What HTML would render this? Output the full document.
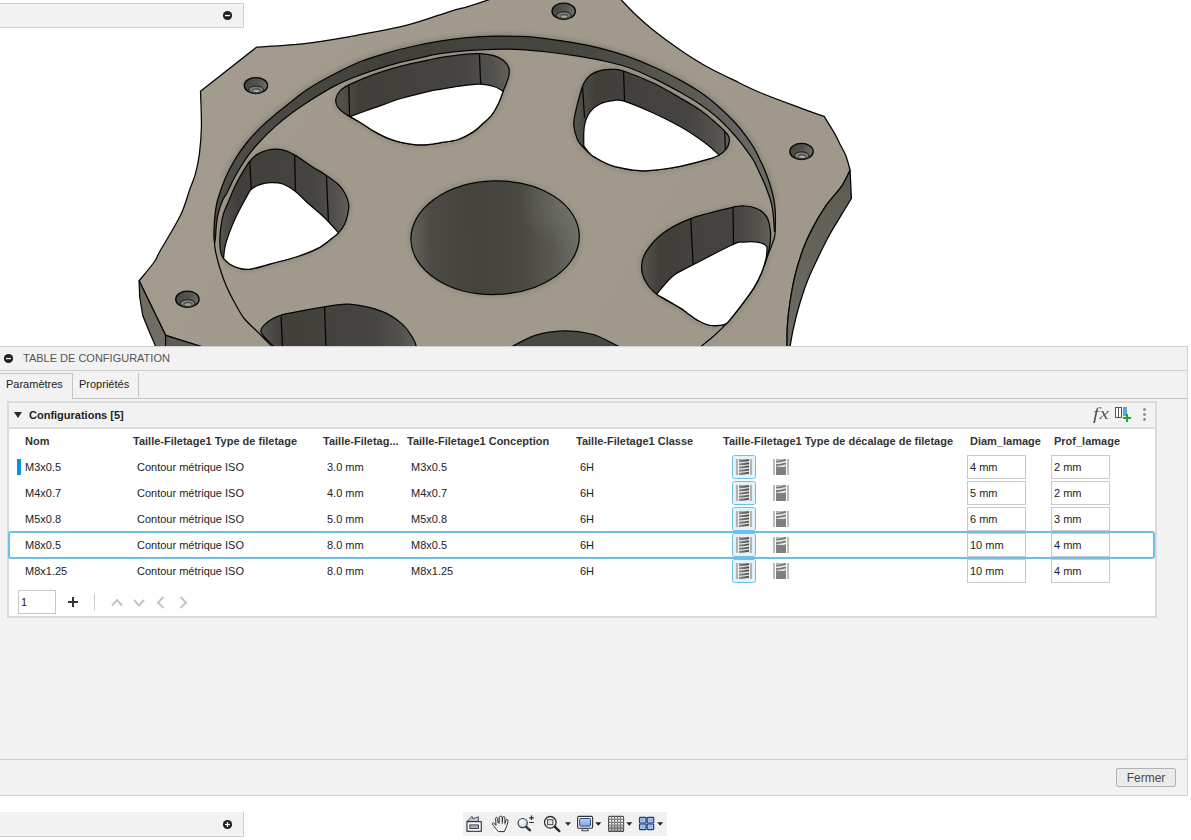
<!DOCTYPE html>
<html lang="fr">
<head>
<meta charset="utf-8">
<title>Table de configuration</title>
<style>
*{box-sizing:border-box;margin:0;padding:0}
html,body{width:1191px;height:840px;overflow:hidden;background:#fff;font-family:"Liberation Sans",Arial,sans-serif;font-size:11px;color:#222}
.abs{position:absolute}
#model{position:absolute;left:0;top:0;width:1191px;height:347px}
.sidebar{position:absolute;left:-1px;width:245px;height:25px;background:#f2f2f2;border:1px solid #cfcfcf}
.dot{position:absolute;width:9px;height:9px;border-radius:50%;background:#1f1f1f}
#panel{position:absolute;left:-1px;top:346px;width:1189px;height:450px;background:#f2f2f2;border:1px solid #cfcfcf}
#ptitle{position:absolute;left:23px;top:352px;font-size:11px;color:#555;line-height:13px}
#tabline{position:absolute;left:0;top:370px;width:1187px;height:1px;background:#cdcdcd}
.tab{position:absolute;top:371px;height:27px;line-height:26px;font-size:11px;color:#222}
#box{position:absolute;left:7px;top:401px;width:1150px;height:217px;border:2px solid #dadada;background:#fff}
#boxhead{position:absolute;left:0;top:0;width:1146px;height:26px;background:#f2f2f2;border-bottom:2px solid #dadada}
.b{font-weight:bold}
.th{position:absolute;top:435px;font-weight:bold;line-height:13px;white-space:nowrap;color:#333}
.td{position:absolute;line-height:13px;white-space:nowrap;color:#222}
.inp{position:absolute;width:59px;height:24px;border:1px solid #c8c8c8;background:#fff;line-height:22px;padding-left:2px;color:#222}
#footline{position:absolute;left:0;top:759px;width:1187px;height:1px;background:#cdcdcd}
#fermer{position:absolute;left:1116px;top:768px;width:60px;height:19px;border:1px solid #b2b2b2;border-radius:2px;background:#ebebeb;font-size:12px;line-height:18px;text-align:center;color:#4a4a4a}
#toolbar{position:absolute;left:463px;top:812px;width:204px;height:24px;background:#f1f1f1}
</style>
</head>
<body>
<svg id="model" viewBox="0 0 1191 347">
<defs>
<linearGradient id="gTop" gradientUnits="userSpaceOnUse" x1="200" y1="40" x2="700" y2="340"><stop offset="0" stop-color="#a29b8e"/><stop offset="0.5" stop-color="#a0998c"/><stop offset="1" stop-color="#9f988b"/></linearGradient>
<linearGradient id="gWall" gradientUnits="userSpaceOnUse" x1="220" y1="0" x2="780" y2="0"><stop offset="0" stop-color="#504e48"/><stop offset="0.3" stop-color="#42403b"/><stop offset="0.65" stop-color="#484641"/><stop offset="0.85" stop-color="#5d5c56"/><stop offset="1" stop-color="#6e6d67"/></linearGradient>
<linearGradient id="gHole" gradientUnits="userSpaceOnUse" x1="411" y1="0" x2="579" y2="0"><stop offset="0" stop-color="#64625c"/><stop offset="0.12" stop-color="#4c4a45"/><stop offset="0.4" stop-color="#45423d"/><stop offset="0.65" stop-color="#4a4843"/><stop offset="0.85" stop-color="#595852"/><stop offset="1" stop-color="#6f6f69"/></linearGradient>
<radialGradient id="gHoleHi" gradientUnits="userSpaceOnUse" cx="565" cy="205" r="45"><stop offset="0" stop-color="#7a7a74" stop-opacity=".5"/><stop offset="1" stop-color="#7a7a74" stop-opacity="0"/></radialGradient>
<linearGradient id="gSideR" gradientUnits="userSpaceOnUse" x1="850" y1="170" x2="790" y2="340"><stop offset="0" stop-color="#5c5b52"/><stop offset="1" stop-color="#6e6c62"/></linearGradient>
<linearGradient id="gPk" x1="0" y1="0" x2="1" y2="0"><stop offset="0" stop-color="#56544f"/><stop offset="0.14" stop-color="#423f3b"/><stop offset="0.72" stop-color="#464440"/><stop offset="0.9" stop-color="#53514c"/><stop offset="1" stop-color="#62615b"/></linearGradient>
<linearGradient id="gScrew" x1="0" y1="0" x2="1" y2="0.3"><stop offset="0" stop-color="#46443f"/><stop offset="0.6" stop-color="#55534e"/><stop offset="1" stop-color="#6d6b65"/></linearGradient>
<filter id="ao" x="-5%" y="-5%" width="110%" height="110%"><feGaussianBlur stdDeviation="2"/></filter>
</defs>
<path d="M256.7 47.1C265.0 46.5 289.6 45.3 306.3 43.3C323.0 41.3 339.9 38.3 356.7 35.3C373.5 32.3 391.4 29.2 407.0 25.2C422.6 21.2 440.2 14.4 450.4 11.3C460.6 8.2 461.2 8.7 468.0 6.6C474.8 4.5 487.2 0.3 491.0 -1.0L620.4 -1.0C623.0 1.7 630.5 9.8 636.0 15.0C641.5 20.2 645.7 24.1 653.1 30.0C660.5 35.9 671.5 44.0 680.6 50.2C689.7 56.4 698.5 62.0 707.5 67.0C716.5 72.0 725.6 76.2 734.4 80.4C743.1 84.7 748.8 87.8 760.0 92.5C771.2 97.2 790.8 104.3 801.5 108.3C812.2 112.3 820.4 115.1 824.2 116.4C825.9 119.2 832.0 128.8 834.6 133.4C837.2 138.0 838.2 140.6 840.0 144.2C841.8 147.8 843.9 150.8 845.6 155.1C847.3 159.4 849.4 167.7 850.1 170.2C848.7 172.8 845.8 180.1 841.7 186.1C837.6 192.1 830.2 199.6 825.5 206.3C820.8 213.1 817.1 219.5 813.4 226.6C809.7 233.7 806.2 240.7 803.2 248.8C800.2 256.9 797.3 266.3 795.1 275.1C792.9 283.9 791.4 293.1 790.1 301.5C788.8 309.9 787.9 318.1 787.4 325.7C786.9 333.3 787.1 343.4 787.0 347.0L203.0 347.0L165.6 335.3L139.1 280.8C141.6 277.7 150.7 267.0 154.2 262.0C157.7 257.0 155.8 258.5 160.2 250.8C164.6 243.1 175.4 225.9 180.4 215.6C185.4 205.2 187.5 195.6 190.0 188.7C192.5 181.8 193.8 179.7 195.4 173.9C197.0 168.1 198.4 161.6 199.4 153.8C200.4 146.0 201.2 137.3 201.4 126.9C201.6 116.5 200.7 97.2 200.5 91.2L256.7 47.1Z" fill="url(#gTop)" stroke="#050505" stroke-width="1.25" stroke-linejoin="round"/>
<path d="M850.1 170.2C848.7 172.8 845.8 180.1 841.7 186.1C837.6 192.1 830.2 199.6 825.5 206.3C820.8 213.1 817.1 219.5 813.4 226.6C809.7 233.7 806.2 240.7 803.2 248.8C800.2 256.9 797.3 266.3 795.1 275.1C792.9 283.9 791.4 293.1 790.1 301.5C788.8 309.9 787.9 318.1 787.4 325.7C786.9 333.3 787.1 343.4 787.0 347.0L790.0 347.0C790.5 344.1 791.6 336.7 793.1 329.8C794.6 322.9 796.8 313.6 799.2 305.5C801.6 297.4 804.3 289.0 807.3 281.2C810.3 273.4 813.7 266.6 817.4 258.9C821.1 251.1 825.5 242.1 829.6 234.7C833.7 227.3 838.1 220.4 841.7 214.4C845.3 208.4 849.8 201.1 851.4 198.4Z" fill="url(#gSideR)" stroke="#050505" stroke-width="1.25" stroke-linejoin="round"/>
<path d="M139.1 280.8L139.7 297.0L142.8 315.8L148.8 330.5L155.9 347.0L165.6 347.0L165.6 335.3Z" fill="#6f6d63" stroke="#050505" stroke-width="1.25" stroke-linejoin="round"/>
<path d="M165.6 335.3L165.6 347.0L203.0 347.0Z" fill="#5d5b53" stroke="#050505" stroke-width="1.25" stroke-linejoin="round"/>
<path d="M224.9 179.3C226.5 176.2 230.8 166.6 234.4 160.5C238.0 154.4 242.0 148.6 246.5 143.0C251.0 137.4 256.1 131.9 261.2 126.9C266.3 121.9 272.0 117.3 277.4 112.8C282.8 108.3 288.6 103.8 293.5 100.0C298.4 96.2 300.2 94.0 306.9 89.7C313.6 85.4 324.9 79.0 333.8 74.3C342.8 69.6 351.7 65.1 360.6 61.5C369.6 57.9 378.5 55.4 387.5 52.8C396.5 50.2 405.6 47.9 414.4 46.0C423.1 44.1 431.2 42.6 440.0 41.2C448.8 39.8 457.9 38.6 466.9 37.7C475.9 36.9 484.9 36.3 493.8 36.1C502.8 35.9 511.7 36.0 520.6 36.4C529.6 36.8 538.5 37.7 547.5 38.8C556.5 39.9 565.6 41.2 574.4 42.8C583.1 44.3 591.2 45.9 600.0 48.1C608.8 50.3 617.9 53.1 626.9 56.2C635.9 59.4 644.8 63.0 653.8 67.0C662.8 71.0 672.9 76.2 680.6 80.4C688.3 84.6 694.0 88.0 700.0 92.1C706.0 96.2 711.2 100.2 716.7 105.0C722.2 109.8 728.4 115.7 733.3 120.8C738.1 125.9 742.3 131.2 745.8 135.8C749.3 140.4 751.8 144.3 754.2 148.3C756.6 152.3 758.4 156.7 760.0 160.0C761.6 163.3 762.1 163.9 763.8 168.0C765.5 172.1 768.3 179.1 770.0 184.5C771.7 189.9 773.4 197.9 774.1 200.6" fill="none" stroke="#4b463d" stroke-opacity=".28" stroke-width="5" filter="url(#ao)"/>
<path d="M335.8 99.1C336.2 96.3 338.1 92.9 340.5 90.4C342.9 88.0 344.3 87.1 349.9 84.4C355.5 81.7 365.6 77.3 374.1 74.3C382.6 71.3 392.1 68.5 401.0 66.2C409.9 63.9 421.3 61.6 427.8 60.2C434.3 58.8 433.5 58.6 440.0 57.6C446.5 56.6 460.3 54.9 466.9 54.2C473.5 53.5 475.2 53.4 479.7 53.6C484.2 53.8 489.9 54.5 493.8 55.6C497.7 56.7 500.8 58.4 503.2 60.3C505.6 62.2 507.5 64.8 508.5 67.0C509.5 69.2 509.5 71.1 509.2 73.8C508.9 76.5 507.5 80.3 506.5 83.2C505.5 86.1 504.4 88.1 503.2 91.2C502.0 94.3 500.9 98.2 499.1 102.0C497.3 105.8 495.1 110.5 492.4 114.1C489.7 117.7 486.1 120.6 483.0 123.5C479.9 126.4 477.8 128.9 473.6 131.6C469.4 134.3 463.6 137.6 458.0 139.5C452.4 141.4 445.0 142.0 440.0 142.8C435.0 143.7 432.1 144.3 427.8 144.6C423.5 144.9 418.9 145.0 414.4 144.6C409.9 144.2 405.5 143.5 401.0 142.4C396.5 141.3 392.0 139.9 387.5 138.1C383.0 136.3 378.6 134.0 374.1 131.4C369.6 128.8 364.6 125.2 360.6 122.7C356.6 120.2 352.6 118.2 349.9 116.6C347.2 115.0 346.5 114.9 344.5 113.3C342.5 111.7 339.2 109.6 337.8 107.2C336.4 104.8 335.4 101.9 335.8 99.1Z" fill="none" stroke="#4b463d" stroke-opacity=".22" stroke-width="4" filter="url(#ao)"/>
<path d="M573.7 124.8C573.4 120.0 574.7 116.3 575.7 111.4C576.7 106.5 578.4 100.0 579.8 95.3C581.1 90.6 582.0 86.6 583.8 83.2C585.6 79.8 587.8 77.2 590.5 75.1C593.2 73.0 596.2 71.5 600.0 70.6C603.8 69.6 609.5 69.3 613.4 69.4C617.3 69.5 616.8 68.7 623.5 71.0C630.2 73.3 644.3 78.8 653.8 83.3C663.3 87.8 672.9 93.8 680.6 98.2C688.3 102.7 694.7 106.4 700.0 110.0C705.3 113.6 708.5 116.5 712.5 120.0C716.5 123.5 721.5 128.0 724.2 130.8C726.9 133.6 728.0 134.9 728.8 136.7C729.6 138.5 729.6 139.8 729.2 141.7C728.9 143.6 728.4 146.1 726.7 148.3C725.0 150.5 722.3 153.2 719.2 155.0C716.1 156.8 714.8 157.3 708.3 159.2C701.8 161.1 688.0 164.7 680.0 166.4C672.0 168.1 666.8 168.8 660.0 169.5C653.2 170.2 646.9 171.2 639.3 170.7C631.6 170.2 620.4 168.0 614.1 166.4C607.8 164.8 605.3 162.9 601.5 161.0C597.7 159.1 594.3 157.3 591.4 155.1C588.5 152.9 586.3 150.5 584.0 148.0C581.7 145.5 579.3 143.9 577.6 140.0C575.9 136.1 574.0 129.6 573.7 124.8Z" fill="none" stroke="#4b463d" stroke-opacity=".22" stroke-width="4" filter="url(#ao)"/>
<path d="M249.8 161.2C252.3 158.2 254.2 156.3 257.2 154.4C260.2 152.5 264.0 150.8 268.0 150.0C272.0 149.2 276.9 148.8 281.4 149.7C285.9 150.5 289.9 152.4 294.8 155.1C299.7 157.8 305.6 162.4 311.0 165.9C316.4 169.4 322.6 172.9 327.1 175.9C331.6 178.9 334.9 181.2 337.8 184.0C340.7 186.8 342.8 189.4 344.6 192.7C346.4 195.9 348.1 200.1 348.6 203.5C349.2 206.9 348.6 210.0 347.9 213.4C347.2 216.8 346.2 220.9 344.6 224.2C343.0 227.4 340.8 230.4 338.5 232.9C336.2 235.4 334.6 236.4 331.1 239.0C327.6 241.6 323.3 245.5 317.7 248.4C312.1 251.3 305.4 253.9 297.5 256.5C289.6 259.1 278.4 261.7 270.6 263.8C262.8 265.9 255.7 268.4 250.5 269.2C245.3 269.9 243.1 269.1 239.7 268.3C236.3 267.5 233.0 266.1 230.3 264.5C227.6 262.9 225.2 260.7 223.6 258.5C222.0 256.3 221.2 254.1 220.6 251.1C220.0 248.1 219.8 244.3 219.8 240.3C219.9 236.3 220.3 231.4 220.9 226.9C221.5 222.4 222.4 217.5 223.6 213.4C224.8 209.3 226.5 206.5 228.3 202.2C230.1 197.9 232.1 192.3 234.4 187.4C236.8 182.5 239.8 177.0 242.4 172.6C245.0 168.2 247.3 164.2 249.8 161.2Z" fill="none" stroke="#4b463d" stroke-opacity=".22" stroke-width="4" filter="url(#ao)"/>
<path d="M641.6 265.9C641.8 260.9 643.0 256.2 646.6 250.8C650.2 245.4 655.8 238.5 663.0 233.2C670.2 227.9 678.5 223.1 690.1 218.8C701.7 214.5 723.3 209.5 732.4 207.4C741.5 205.3 740.7 205.9 744.5 206.0C748.3 206.1 752.2 206.9 755.3 208.0C758.4 209.1 761.2 210.8 763.3 212.7C765.4 214.6 766.8 216.3 768.0 219.5C769.2 222.7 770.2 227.8 770.5 232.1C770.8 236.3 770.4 240.8 769.8 245.0C769.2 249.2 768.5 252.5 767.1 257.1C765.7 261.8 763.5 267.9 761.4 272.9C759.3 277.9 757.1 282.4 754.3 287.1C751.4 291.9 747.6 296.9 744.3 301.4C741.0 305.9 737.3 310.6 734.3 314.3C731.3 318.0 728.8 321.8 726.4 323.6C724.0 325.4 723.0 325.1 720.0 325.3C717.0 325.5 712.4 325.9 708.6 325.0C704.8 324.1 700.7 322.0 697.1 320.0C693.5 318.0 690.0 314.9 687.1 312.9C684.2 310.9 685.1 311.0 680.0 307.9C674.9 304.8 662.5 298.7 656.7 294.2C650.9 289.7 647.8 285.7 645.3 281.0C642.8 276.3 641.4 270.9 641.6 265.9Z" fill="none" stroke="#4b463d" stroke-opacity=".22" stroke-width="4" filter="url(#ao)"/>
<ellipse cx="495.1" cy="237.700" rx="84.200" ry="56.800" fill="none" stroke="#4b463d" stroke-opacity=".22" stroke-width="4" filter="url(#ao)"/>
<path d="M214.2 240.0C214.1 238.9 213.8 237.6 213.9 233.6C214.0 229.6 214.3 221.7 214.9 216.1C215.5 210.5 215.9 206.1 217.6 200.0C219.3 193.9 222.1 185.9 224.9 179.3C227.7 172.7 230.8 166.6 234.4 160.5C238.0 154.4 242.0 148.6 246.5 143.0C251.0 137.4 256.1 131.9 261.2 126.9C266.3 121.9 272.0 117.3 277.4 112.8C282.8 108.3 288.6 103.8 293.5 100.0C298.4 96.2 300.2 94.0 306.9 89.7C313.6 85.4 324.9 79.0 333.8 74.3C342.8 69.6 351.7 65.1 360.6 61.5C369.6 57.9 378.5 55.4 387.5 52.8C396.5 50.2 405.6 47.9 414.4 46.0C423.1 44.1 431.2 42.6 440.0 41.2C448.8 39.8 457.9 38.6 466.9 37.7C475.9 36.9 484.9 36.3 493.8 36.1C502.8 35.9 511.7 36.0 520.6 36.4C529.6 36.8 538.5 37.7 547.5 38.8C556.5 39.9 565.6 41.2 574.4 42.8C583.1 44.3 591.2 45.9 600.0 48.1C608.8 50.3 617.9 53.1 626.9 56.2C635.9 59.4 644.8 63.0 653.8 67.0C662.8 71.0 672.9 76.2 680.6 80.4C688.3 84.6 694.0 88.0 700.0 92.1C706.0 96.2 711.2 100.2 716.7 105.0C722.2 109.8 728.4 115.7 733.3 120.8C738.1 125.9 742.3 131.2 745.8 135.8C749.3 140.4 751.8 144.3 754.2 148.3C756.6 152.3 758.4 156.7 760.0 160.0C761.6 163.3 762.1 163.9 763.8 168.0C765.5 172.1 768.3 179.1 770.0 184.5C771.7 189.9 773.2 195.7 774.1 200.6C775.0 205.5 775.2 208.8 775.4 214.1C775.6 219.3 775.2 229.1 775.2 232.1L774.5 232.0C774.3 229.5 773.9 221.6 773.4 216.8C772.9 212.0 772.6 208.2 771.4 203.3C770.2 198.4 768.1 192.7 766.0 187.2C763.9 181.7 760.6 175.0 758.5 170.5C756.4 166.0 755.1 163.1 753.3 160.0C751.5 156.9 749.7 154.8 747.5 151.7C745.3 148.6 743.0 145.4 740.0 141.7C737.0 137.9 733.1 133.3 729.2 129.2C725.3 125.1 721.6 121.2 716.7 117.0C711.8 112.8 706.0 108.4 700.0 104.3C694.0 100.2 688.3 96.8 680.6 92.5C672.9 88.2 662.8 82.7 653.8 78.4C644.8 74.2 635.9 70.0 626.9 67.0C617.9 64.0 608.8 62.1 600.0 60.2C591.2 58.3 583.1 57.0 574.4 55.6C565.6 54.2 556.5 53.0 547.5 52.0C538.5 51.0 529.6 50.1 520.6 49.6C511.7 49.1 502.8 49.1 493.8 49.3C484.9 49.5 475.9 49.9 466.9 50.6C457.9 51.3 446.5 52.7 440.0 53.6C433.5 54.5 434.3 54.7 427.8 56.1C421.3 57.5 409.9 59.9 401.0 62.2C392.1 64.5 382.6 67.4 374.1 70.2C365.6 73.0 356.6 76.3 349.9 79.0C343.2 81.7 340.3 82.9 333.8 86.4C327.3 89.9 317.9 95.6 311.0 100.0C304.1 104.4 298.2 108.3 292.2 112.8C286.1 117.3 280.3 121.9 274.7 126.9C269.1 131.9 263.2 137.8 258.5 143.0C253.8 148.2 250.3 152.4 246.5 157.8C242.7 163.2 238.9 169.5 235.7 175.3C232.4 181.1 229.2 188.6 227.0 192.7C224.8 196.8 224.3 196.6 222.8 200.0C221.3 203.4 219.3 208.9 218.2 213.4C217.1 217.9 216.6 222.9 216.2 226.9C215.8 230.9 215.8 234.9 215.5 237.6C215.2 240.3 214.8 242.1 214.6 243.0Z" fill="url(#gWall)" stroke="none"/>
<path d="M214.2 240.0C214.4 241.8 214.6 246.6 215.5 251.1C216.4 255.6 217.8 261.4 219.6 267.2C221.4 273.0 223.8 280.2 226.3 286.0C228.8 291.8 231.4 296.8 234.4 302.2C237.4 307.6 240.1 313.3 244.2 318.5C248.3 323.7 254.3 328.4 259.0 333.2C263.7 337.9 270.2 344.7 272.5 347.0" fill="none" stroke="#050505" stroke-width="1.25" stroke-linejoin="round"/>
<path d="M214.2 240.0C214.1 238.9 213.8 237.6 213.9 233.6C214.0 229.6 214.3 221.7 214.9 216.1C215.5 210.5 215.9 206.1 217.6 200.0C219.3 193.9 222.1 185.9 224.9 179.3C227.7 172.7 230.8 166.6 234.4 160.5C238.0 154.4 242.0 148.6 246.5 143.0C251.0 137.4 256.1 131.9 261.2 126.9C266.3 121.9 272.0 117.3 277.4 112.8C282.8 108.3 288.6 103.8 293.5 100.0C298.4 96.2 300.2 94.0 306.9 89.7C313.6 85.4 324.9 79.0 333.8 74.3C342.8 69.6 351.7 65.1 360.6 61.5C369.6 57.9 378.5 55.4 387.5 52.8C396.5 50.2 405.6 47.9 414.4 46.0C423.1 44.1 431.2 42.6 440.0 41.2C448.8 39.8 457.9 38.6 466.9 37.7C475.9 36.9 484.9 36.3 493.8 36.1C502.8 35.9 511.7 36.0 520.6 36.4C529.6 36.8 538.5 37.7 547.5 38.8C556.5 39.9 565.6 41.2 574.4 42.8C583.1 44.3 591.2 45.9 600.0 48.1C608.8 50.3 617.9 53.1 626.9 56.2C635.9 59.4 644.8 63.0 653.8 67.0C662.8 71.0 672.9 76.2 680.6 80.4C688.3 84.6 694.0 88.0 700.0 92.1C706.0 96.2 711.2 100.2 716.7 105.0C722.2 109.8 728.4 115.7 733.3 120.8C738.1 125.9 742.3 131.2 745.8 135.8C749.3 140.4 751.8 144.3 754.2 148.3C756.6 152.3 758.4 156.7 760.0 160.0C761.6 163.3 762.1 163.9 763.8 168.0C765.5 172.1 768.3 179.1 770.0 184.5C771.7 189.9 773.2 195.7 774.1 200.6C775.0 205.5 775.2 208.8 775.4 214.1C775.6 219.3 775.2 229.1 775.2 232.1" fill="none" stroke="#050505" stroke-width="1.25" stroke-linejoin="round"/>
<path d="M775.2 232.1C775.1 233.1 774.9 235.7 774.3 238.0C773.7 240.3 772.6 242.8 771.4 246.0C770.2 249.2 768.8 252.6 767.1 257.1C765.4 261.6 763.5 267.9 761.4 272.9C759.3 277.9 757.1 282.4 754.3 287.1C751.4 291.9 747.6 296.9 744.3 301.4C741.0 305.9 737.3 310.6 734.3 314.3C731.3 318.0 729.5 320.3 726.4 323.6C723.3 326.9 719.6 330.7 715.7 334.3C711.8 337.9 705.4 342.9 702.9 345.0C700.4 347.1 700.9 346.7 700.5 347.0" fill="none" stroke="#050505" stroke-width="1.25" stroke-linejoin="round"/>
<path d="M214.6 243.0C214.8 242.1 215.2 240.3 215.5 237.6C215.8 234.9 215.8 230.9 216.2 226.9C216.6 222.9 217.1 217.9 218.2 213.4C219.3 208.9 221.3 203.4 222.8 200.0C224.3 196.6 224.8 196.8 227.0 192.7C229.2 188.6 232.4 181.1 235.7 175.3C238.9 169.5 242.7 163.2 246.5 157.8C250.3 152.4 253.8 148.2 258.5 143.0C263.2 137.8 269.1 131.9 274.7 126.9C280.3 121.9 286.1 117.3 292.2 112.8C298.2 108.3 304.1 104.4 311.0 100.0C317.9 95.6 327.3 89.9 333.8 86.4C340.3 82.9 343.2 81.7 349.9 79.0C356.6 76.3 365.6 73.0 374.1 70.2C382.6 67.4 392.1 64.5 401.0 62.2C409.9 59.9 421.3 57.5 427.8 56.1C434.3 54.7 433.5 54.5 440.0 53.6C446.5 52.7 457.9 51.3 466.9 50.6C475.9 49.9 484.9 49.5 493.8 49.3C502.8 49.1 511.7 49.1 520.6 49.6C529.6 50.1 538.5 51.0 547.5 52.0C556.5 53.0 565.6 54.2 574.4 55.6C583.1 57.0 591.2 58.3 600.0 60.2C608.8 62.1 617.9 64.0 626.9 67.0C635.9 70.0 644.8 74.2 653.8 78.4C662.8 82.7 672.9 88.2 680.6 92.5C688.3 96.8 694.0 100.2 700.0 104.3C706.0 108.4 711.8 112.8 716.7 117.0C721.6 121.2 725.3 125.1 729.2 129.2C733.1 133.3 737.0 137.9 740.0 141.7C743.0 145.4 745.3 148.6 747.5 151.7C749.7 154.8 751.5 156.9 753.3 160.0C755.1 163.1 756.4 166.0 758.5 170.5C760.6 175.0 763.9 181.7 766.0 187.2C768.1 192.7 770.2 198.4 771.4 203.3C772.6 208.2 772.9 212.0 773.4 216.8C773.9 221.6 774.3 229.5 774.5 232.0" fill="none" stroke="#050505" stroke-width="1.25" stroke-linejoin="round" stroke-width="1.1"/>
<path d="M335.8 99.1C336.2 96.3 338.1 92.9 340.5 90.4C342.9 88.0 344.3 87.1 349.9 84.4C355.5 81.7 365.6 77.3 374.1 74.3C382.6 71.3 392.1 68.5 401.0 66.2C409.9 63.9 421.3 61.6 427.8 60.2C434.3 58.8 433.5 58.6 440.0 57.6C446.5 56.6 460.3 54.9 466.9 54.2C473.5 53.5 475.2 53.4 479.7 53.6C484.2 53.8 489.9 54.5 493.8 55.6C497.7 56.7 500.8 58.4 503.2 60.3C505.6 62.2 507.5 64.8 508.5 67.0C509.5 69.2 509.5 71.1 509.2 73.8C508.9 76.5 507.5 80.3 506.5 83.2C505.5 86.1 504.4 88.1 503.2 91.2C502.0 94.3 500.9 98.2 499.1 102.0C497.3 105.8 495.1 110.5 492.4 114.1C489.7 117.7 486.1 120.6 483.0 123.5C479.9 126.4 477.8 128.9 473.6 131.6C469.4 134.3 463.6 137.6 458.0 139.5C452.4 141.4 445.0 142.0 440.0 142.8C435.0 143.7 432.1 144.3 427.8 144.6C423.5 144.9 418.9 145.0 414.4 144.6C409.9 144.2 405.5 143.5 401.0 142.4C396.5 141.3 392.0 139.9 387.5 138.1C383.0 136.3 378.6 134.0 374.1 131.4C369.6 128.8 364.6 125.2 360.6 122.7C356.6 120.2 352.6 118.2 349.9 116.6C347.2 115.0 346.5 114.9 344.5 113.3C342.5 111.7 339.2 109.6 337.8 107.2C336.4 104.8 335.4 101.9 335.8 99.1Z" fill="url(#gPk)" stroke="#050505" stroke-width="1.25" stroke-linejoin="round"/>
<path d="M349.9 116.6C353.9 115.1 365.6 110.9 374.1 107.9C382.6 104.9 392.1 101.2 401.0 98.5C409.9 95.8 421.3 93.2 427.8 91.7C434.3 90.2 433.5 90.4 440.0 89.3C446.5 88.2 460.2 86.0 466.9 85.2C473.6 84.4 475.8 84.0 480.3 84.2C484.8 84.4 490.0 85.3 493.8 86.5C497.6 87.7 501.6 90.4 503.2 91.2L503.2 91.2C502.5 93.0 500.9 98.2 499.1 102.0C497.3 105.8 495.1 110.5 492.4 114.1C489.7 117.7 486.1 120.6 483.0 123.5C479.9 126.4 477.8 128.9 473.6 131.6C469.4 134.3 463.6 137.6 458.0 139.5C452.4 141.4 445.0 142.0 440.0 142.8C435.0 143.7 432.1 144.3 427.8 144.6C423.5 144.9 418.9 145.0 414.4 144.6C409.9 144.2 405.5 143.5 401.0 142.4C396.5 141.3 392.0 139.9 387.5 138.1C383.0 136.3 378.6 134.0 374.1 131.4C369.6 128.8 364.6 125.2 360.6 122.7C356.6 120.2 351.7 117.6 349.9 116.6Z" fill="#fff" stroke="#050505" stroke-width="1.25" stroke-linejoin="round" stroke-width="1.1"/>
<path d="M348.8 85.0L349.6 115.9" fill="none" stroke="#050505" stroke-width="1.25" stroke-linejoin="round" stroke-width="1.1"/>
<path d="M479.4 53.9L480.7 84.2" fill="none" stroke="#050505" stroke-width="1.25" stroke-linejoin="round" stroke-width="1.1"/>
<path d="M573.7 124.8C573.4 120.0 574.7 116.3 575.7 111.4C576.7 106.5 578.4 100.0 579.8 95.3C581.1 90.6 582.0 86.6 583.8 83.2C585.6 79.8 587.8 77.2 590.5 75.1C593.2 73.0 596.2 71.5 600.0 70.6C603.8 69.6 609.5 69.3 613.4 69.4C617.3 69.5 616.8 68.7 623.5 71.0C630.2 73.3 644.3 78.8 653.8 83.3C663.3 87.8 672.9 93.8 680.6 98.2C688.3 102.7 694.7 106.4 700.0 110.0C705.3 113.6 708.5 116.5 712.5 120.0C716.5 123.5 721.5 128.0 724.2 130.8C726.9 133.6 728.0 134.9 728.8 136.7C729.6 138.5 729.6 139.8 729.2 141.7C728.9 143.6 728.4 146.1 726.7 148.3C725.0 150.5 722.3 153.2 719.2 155.0C716.1 156.8 714.8 157.3 708.3 159.2C701.8 161.1 688.0 164.7 680.0 166.4C672.0 168.1 666.8 168.8 660.0 169.5C653.2 170.2 646.9 171.2 639.3 170.7C631.6 170.2 620.4 168.0 614.1 166.4C607.8 164.8 605.3 162.9 601.5 161.0C597.7 159.1 594.3 157.3 591.4 155.1C588.5 152.9 586.3 150.5 584.0 148.0C581.7 145.5 579.3 143.9 577.6 140.0C575.9 136.1 574.0 129.6 573.7 124.8Z" fill="url(#gPk)" stroke="#050505" stroke-width="1.25" stroke-linejoin="round"/>
<path d="M583.8 146.0C583.8 143.7 583.6 136.1 583.8 132.1C584.0 128.1 584.1 125.7 585.2 122.2C586.3 118.8 588.0 114.4 590.5 111.4C593.0 108.4 596.2 105.8 600.0 104.0C603.8 102.2 609.4 101.1 613.4 100.6C617.4 100.1 617.5 99.1 624.2 101.2C630.9 103.3 644.4 109.0 653.8 113.3C663.2 117.6 672.9 122.5 680.6 126.8C688.3 131.1 695.1 135.9 700.0 139.2C704.9 142.5 706.9 144.1 710.0 146.7C713.1 149.3 717.3 153.5 718.8 154.8L719.2 155.0C717.4 155.7 714.8 157.3 708.3 159.2C701.8 161.1 688.0 164.7 680.0 166.4C672.0 168.1 666.8 168.8 660.0 169.5C653.2 170.2 646.9 171.2 639.3 170.7C631.6 170.2 620.4 168.0 614.1 166.4C607.8 164.8 605.3 162.9 601.5 161.0C597.7 159.1 594.4 157.6 591.4 155.1C588.4 152.6 585.1 147.5 583.8 146.0Z" fill="#fff" stroke="#050505" stroke-width="1.25" stroke-linejoin="round" stroke-width="1.1"/>
<path d="M582.5 85.9L584.5 118.1" fill="none" stroke="#050505" stroke-width="1.25" stroke-linejoin="round" stroke-width="1.1"/>
<path d="M623.5 71.0L624.6 101.2" fill="none" stroke="#050505" stroke-width="1.25" stroke-linejoin="round" stroke-width="1.1"/>
<path d="M724.6 131.3L725.4 150.0" fill="none" stroke="#050505" stroke-width="1.25" stroke-linejoin="round" stroke-width="1.1"/>
<path d="M249.8 161.2C252.3 158.2 254.2 156.3 257.2 154.4C260.2 152.5 264.0 150.8 268.0 150.0C272.0 149.2 276.9 148.8 281.4 149.7C285.9 150.5 289.9 152.4 294.8 155.1C299.7 157.8 305.6 162.4 311.0 165.9C316.4 169.4 322.6 172.9 327.1 175.9C331.6 178.9 334.9 181.2 337.8 184.0C340.7 186.8 342.8 189.4 344.6 192.7C346.4 195.9 348.1 200.1 348.6 203.5C349.2 206.9 348.6 210.0 347.9 213.4C347.2 216.8 346.2 220.9 344.6 224.2C343.0 227.4 340.8 230.4 338.5 232.9C336.2 235.4 334.6 236.4 331.1 239.0C327.6 241.6 323.3 245.5 317.7 248.4C312.1 251.3 305.4 253.9 297.5 256.5C289.6 259.1 278.4 261.7 270.6 263.8C262.8 265.9 255.7 268.4 250.5 269.2C245.3 269.9 243.1 269.1 239.7 268.3C236.3 267.5 233.0 266.1 230.3 264.5C227.6 262.9 225.2 260.7 223.6 258.5C222.0 256.3 221.2 254.1 220.6 251.1C220.0 248.1 219.8 244.3 219.8 240.3C219.9 236.3 220.3 231.4 220.9 226.9C221.5 222.4 222.4 217.5 223.6 213.4C224.8 209.3 226.5 206.5 228.3 202.2C230.1 197.9 232.1 192.3 234.4 187.4C236.8 182.5 239.8 177.0 242.4 172.6C245.0 168.2 247.3 164.2 249.8 161.2Z" fill="url(#gPk)" stroke="#050505" stroke-width="1.25" stroke-linejoin="round"/>
<path d="M223.6 258.5C223.8 256.6 224.0 251.2 224.9 247.0C225.8 242.8 227.2 238.5 229.0 233.6C230.8 228.7 233.0 223.2 235.7 217.5C238.4 211.8 242.5 204.2 245.1 199.5C247.7 194.8 248.7 191.9 251.2 189.4C253.7 186.9 256.7 185.8 259.9 184.7C263.1 183.6 266.8 182.8 270.6 182.7C274.4 182.6 278.6 182.6 282.7 184.0C286.8 185.4 291.5 188.4 295.5 191.4C299.5 194.4 302.1 197.8 306.9 202.2C311.7 206.5 319.1 212.4 324.4 217.5C329.7 222.6 336.1 230.3 338.5 232.9L338.5 232.9C337.3 233.9 334.6 236.4 331.1 239.0C327.6 241.6 323.3 245.5 317.7 248.4C312.1 251.3 305.4 253.9 297.5 256.5C289.6 259.1 278.4 261.7 270.6 263.8C262.8 265.9 255.7 268.4 250.5 269.2C245.3 269.9 243.1 269.1 239.7 268.3C236.3 267.5 233.0 266.1 230.3 264.5C227.6 262.9 224.7 259.5 223.6 258.5Z" fill="#fff" stroke="#050505" stroke-width="1.25" stroke-linejoin="round" stroke-width="1.1"/>
<path d="M249.8 161.2L251.2 189.4" fill="none" stroke="#050505" stroke-width="1.25" stroke-linejoin="round" stroke-width="1.1"/>
<path d="M294.6 155.1L295.5 191.4" fill="none" stroke="#050505" stroke-width="1.25" stroke-linejoin="round" stroke-width="1.1"/>
<path d="M326.4 175.9L328.4 220.5" fill="none" stroke="#050505" stroke-width="1.25" stroke-linejoin="round" stroke-width="1.1"/>
<path d="M641.6 265.9C641.8 260.9 643.0 256.2 646.6 250.8C650.2 245.4 655.8 238.5 663.0 233.2C670.2 227.9 678.5 223.1 690.1 218.8C701.7 214.5 723.3 209.5 732.4 207.4C741.5 205.3 740.7 205.9 744.5 206.0C748.3 206.1 752.2 206.9 755.3 208.0C758.4 209.1 761.2 210.8 763.3 212.7C765.4 214.6 766.8 216.3 768.0 219.5C769.2 222.7 770.2 227.8 770.5 232.1C770.8 236.3 770.4 240.8 769.8 245.0C769.2 249.2 768.5 252.5 767.1 257.1C765.7 261.8 763.5 267.9 761.4 272.9C759.3 277.9 757.1 282.4 754.3 287.1C751.4 291.9 747.6 296.9 744.3 301.4C741.0 305.9 737.3 310.6 734.3 314.3C731.3 318.0 728.8 321.8 726.4 323.6C724.0 325.4 723.0 325.1 720.0 325.3C717.0 325.5 712.4 325.9 708.6 325.0C704.8 324.1 700.7 322.0 697.1 320.0C693.5 318.0 690.0 314.9 687.1 312.9C684.2 310.9 685.1 311.0 680.0 307.9C674.9 304.8 662.5 298.7 656.7 294.2C650.9 289.7 647.8 285.7 645.3 281.0C642.8 276.3 641.4 270.9 641.6 265.9Z" fill="url(#gPk)" stroke="#050505" stroke-width="1.25" stroke-linejoin="round"/>
<path d="M656.7 294.2C659.4 291.2 666.9 280.9 673.0 276.0C679.1 271.1 683.1 270.0 693.2 264.7C703.3 259.4 725.1 248.1 733.6 244.3C742.1 240.5 740.4 242.5 744.3 242.1C748.2 241.7 753.8 241.7 757.1 242.1C760.4 242.5 762.6 243.4 764.3 244.3C766.0 245.2 766.6 247.0 767.1 247.5L767.1 247.5C766.9 249.3 767.0 254.4 766.0 258.6C765.0 262.8 763.4 268.1 761.4 272.9C759.4 277.6 757.1 282.4 754.3 287.1C751.4 291.9 747.6 296.9 744.3 301.4C741.0 305.9 737.3 310.6 734.3 314.3C731.3 318.0 728.8 321.8 726.4 323.6C724.0 325.4 723.0 325.1 720.0 325.3C717.0 325.5 712.4 325.9 708.6 325.0C704.8 324.1 700.7 322.0 697.1 320.0C693.5 318.0 690.0 314.9 687.1 312.9C684.2 310.9 685.1 311.0 680.0 307.9C674.9 304.8 660.6 296.5 656.7 294.2Z" fill="#fff" stroke="#050505" stroke-width="1.25" stroke-linejoin="round" stroke-width="1.1"/>
<path d="M690.7 218.6L693.2 264.7" fill="none" stroke="#050505" stroke-width="1.25" stroke-linejoin="round" stroke-width="1.1"/>
<path d="M733.0 208.0L733.5 244.5" fill="none" stroke="#050505" stroke-width="1.25" stroke-linejoin="round" stroke-width="1.1"/>
<path d="M274.0 347.0C271.8 344.5 262.1 336.0 261.0 331.9C259.9 327.8 264.3 325.1 267.1 322.5C269.9 319.9 274.0 318.0 277.8 316.4C281.6 314.8 282.2 314.7 290.0 313.1C297.8 311.5 314.5 308.4 324.4 306.9C334.2 305.4 339.5 303.5 349.1 304.2C358.7 304.9 373.1 308.0 381.9 311.3C390.7 314.6 396.8 319.3 402.0 323.9C407.2 328.5 411.0 335.1 413.4 339.0C415.8 342.9 415.9 345.7 416.4 347.0Z" fill="url(#gPk)" stroke="#050505" stroke-width="1.25" stroke-linejoin="round"/>
<path d="M281.1 316.5L282.5 347.0" fill="none" stroke="#050505" stroke-width="1.25" stroke-linejoin="round" stroke-width="1.1"/>
<path d="M324.5 306.2L326.0 347.0" fill="none" stroke="#050505" stroke-width="1.25" stroke-linejoin="round" stroke-width="1.1"/>
<path d="M511.0 347.0C515.2 345.0 527.2 337.9 536.0 335.2C544.8 332.5 554.5 331.1 563.7 330.9C572.9 330.7 583.8 332.2 591.4 334.0C599.0 335.8 604.3 339.3 609.1 341.5C613.9 343.7 618.2 346.1 620.0 347.0Z" fill="#4a4843" stroke="#050505" stroke-width="1.25" stroke-linejoin="round"/>
<ellipse cx="495.1" cy="237.7" rx="84.2" ry="56.8" transform="rotate(-1.5 495 237.5)" fill="url(#gHole)" stroke="#050505" stroke-width="1.25" stroke-linejoin="round"/>
<ellipse cx="495.1" cy="237.7" rx="83.6" ry="56.1" transform="rotate(-1.5 495 237.5)" fill="url(#gHoleHi)" stroke="none"/>
<ellipse cx="255.9" cy="85.6" rx="11.7" ry="8.1" fill="url(#gScrew)" stroke="#050505" stroke-width="1.25" stroke-linejoin="round"/>
<ellipse cx="256.1" cy="89.69999999999999" rx="7.4" ry="3.7" fill="#7b7972" stroke="#111" stroke-width="0.9"/>
<ellipse cx="256.4" cy="90.89999999999999" rx="4" ry="1.9" fill="#a5a39c" stroke="#222" stroke-width="0.8"/>
<ellipse cx="563.7" cy="11.3" rx="11.7" ry="8.1" fill="url(#gScrew)" stroke="#050505" stroke-width="1.25" stroke-linejoin="round"/>
<ellipse cx="563.9000000000001" cy="15.4" rx="7.4" ry="3.7" fill="#7b7972" stroke="#111" stroke-width="0.9"/>
<ellipse cx="564.2" cy="16.6" rx="4" ry="1.9" fill="#a5a39c" stroke="#222" stroke-width="0.8"/>
<ellipse cx="801.5" cy="151.5" rx="11.7" ry="8.1" fill="url(#gScrew)" stroke="#050505" stroke-width="1.25" stroke-linejoin="round"/>
<ellipse cx="801.7" cy="155.6" rx="7.4" ry="3.7" fill="#7b7972" stroke="#111" stroke-width="0.9"/>
<ellipse cx="802.0" cy="156.8" rx="4" ry="1.9" fill="#a5a39c" stroke="#222" stroke-width="0.8"/>
<ellipse cx="187.4" cy="299.2" rx="11.7" ry="8.1" fill="url(#gScrew)" stroke="#050505" stroke-width="1.25" stroke-linejoin="round"/>
<ellipse cx="187.6" cy="303.3" rx="7.4" ry="3.7" fill="#7b7972" stroke="#111" stroke-width="0.9"/>
<ellipse cx="187.9" cy="304.5" rx="4" ry="1.9" fill="#a5a39c" stroke="#222" stroke-width="0.8"/>
</svg>
<div class="sidebar" style="top:3px"></div><svg class="abs" style="left:222px;top:10px" width="11" height="11"><circle cx="5.5" cy="5.5" r="4.6" fill="#222"/><rect x="3" y="4.9" width="5" height="1.3" fill="#fff"/></svg>
<div id="panel"></div>
<svg class="abs" style="left:3px;top:353px" width="11" height="11"><circle cx="5.5" cy="5.5" r="4.6" fill="#222"/><rect x="3" y="4.9" width="5" height="1.3" fill="#fff"/></svg>
<div id="ptitle">TABLE DE CONFIGURATION</div>
<div id="tabline"></div>
<div class="abs" style="left:0;top:373px;width:73px;height:26px;border-top:1px solid #c4c4c4;border-right:1px solid #c4c4c4"></div>
<div class="abs" style="left:72px;top:398px;width:1115px;height:1px;background:#c4c4c4"></div>
<div class="abs" style="left:138px;top:373px;width:1px;height:24px;background:#c4c4c4"></div>
<div class="tab" style="left:6px">Paramètres</div>
<div class="tab" style="left:79px">Propriétés</div>
<div id="box"><div id="boxhead"></div></div>
<svg width="0" height="0" style="position:absolute">
<defs>
<linearGradient id="thg" x1="0" x2="1" y1="0" y2="0"><stop offset="0" stop-color="#8a8a8a"/><stop offset="0.45" stop-color="#6a6a6a"/><stop offset="1" stop-color="#4e4e4e"/></linearGradient>
</defs></svg>
<div class="abs" style="left:14px;top:412px;width:0;height:0;border-left:4.5px solid transparent;border-right:4.5px solid transparent;border-top:6px solid #2b2b2b"></div>
<div class="td b" style="left:29px;top:409px;color:#222">Configurations [5]</div>
<div class="abs" style="left:1093px;top:405px;font-family:'Liberation Serif',serif;font-style:italic;font-size:17px;line-height:18px;color:#555;letter-spacing:.5px;transform:scaleX(1.25);transform-origin:0 0">fx</div>
<svg class="abs" style="left:1113px;top:405px" width="20" height="20"><rect x="2.5" y="2.5" width="3" height="10" fill="#fff" stroke="#555"/><rect x="5.5" y="2.5" width="3" height="10" fill="#fff" stroke="#555"/><rect x="10" y="2" width="4" height="9" fill="#5aa5e0"/><path d="M10 13h8M14 9v8" stroke="#1ca538" stroke-width="2"/></svg>
<svg class="abs" style="left:1140px;top:405px" width="10" height="20"><circle cx="4.5" cy="4.5" r="1.4" fill="#8a8a8a"/><circle cx="4.5" cy="9.5" r="1.4" fill="#8a8a8a"/><circle cx="4.5" cy="14.5" r="1.4" fill="#8a8a8a"/></svg>
<div class="th" style="left:25px">Nom</div>
<div class="th" style="left:133px">Taille-Filetage1 Type de filetage</div>
<div class="th" style="left:323px">Taille-Filetag...</div>
<div class="th" style="left:407px">Taille-Filetage1 Conception</div>
<div class="th" style="left:576px">Taille-Filetage1 Classe</div>
<div class="th" style="left:723px">Taille-Filetage1 Type de décalage de filetage</div>
<div class="th" style="left:970px">Diam_lamage</div>
<div class="th" style="left:1054px">Prof_lamage</div>
<div class="abs" style="left:17px;top:459px;width:4px;height:16px;background:#0d93d4"></div>
<div class="td" style="left:25px;top:461px">M3x0.5</div>
<div class="td" style="left:137px;top:461px">Contour métrique ISO</div>
<div class="td" style="left:327px;top:461px">3.0 mm</div>
<div class="td" style="left:411px;top:461px">M3x0.5</div>
<div class="td" style="left:580px;top:461px">6H</div>
<svg class="abs" style="left:732px;top:455px" width="24" height="24"><rect x="0.5" y="0.5" width="23" height="23" rx="2" fill="#e6f2fa" stroke="#6cc0ea"/>
<rect x="4" y="4" width="2" height="16" fill="#b7b2b0"/><rect x="18" y="4" width="2" height="16" fill="#b7b2b0"/>
<rect x="7" y="4" width="10" height="16" fill="#dfe3e6"/>
<g stroke="url(#thg)" stroke-width="1.9" fill="none">
<path d="M7 6.200Q12 6 17 5"/><path d="M7 9.400Q12 9.200 17 8.200"/><path d="M7 12.600Q12 12.400 17 11.400"/><path d="M7 15.800Q12 15.600 17 14.600"/><path d="M7 19Q12 18.800 17 17.800"/>
</g>
<path d="M7 4 h10 v0.8 q-5 -1 -10 0z" fill="#777"/></svg>
<svg class="abs" style="left:770px;top:455px" width="24" height="24"><rect x="3" y="4" width="2" height="16" fill="#bcbcbc"/><rect x="17" y="4" width="2" height="16" fill="#bcbcbc"/>
<rect x="6" y="4" width="10" height="8" fill="#e4e6e8"/>
<g stroke="#777" stroke-width="1.8" fill="none">
<path d="M6 6.6 Q11 6.2 16 4.8"/><path d="M6 10.2 Q11 9.8 16 8.4"/>
</g>
<path d="M6 4 h10 v0.8 q-5 -1 -10 0z" fill="#888"/>
<path d="M6 11.2 q5 1.8 10 0 V20 H6z" fill="#808080"/></svg>
<div class="inp" style="left:967px;top:455px">4 mm</div>
<div class="inp" style="left:1051px;top:455px">2 mm</div>
<div class="td" style="left:25px;top:487px">M4x0.7</div>
<div class="td" style="left:137px;top:487px">Contour métrique ISO</div>
<div class="td" style="left:327px;top:487px">4.0 mm</div>
<div class="td" style="left:411px;top:487px">M4x0.7</div>
<div class="td" style="left:580px;top:487px">6H</div>
<svg class="abs" style="left:732px;top:481px" width="24" height="24"><rect x="0.5" y="0.5" width="23" height="23" rx="2" fill="#e6f2fa" stroke="#6cc0ea"/>
<rect x="4" y="4" width="2" height="16" fill="#b7b2b0"/><rect x="18" y="4" width="2" height="16" fill="#b7b2b0"/>
<rect x="7" y="4" width="10" height="16" fill="#dfe3e6"/>
<g stroke="url(#thg)" stroke-width="1.9" fill="none">
<path d="M7 6.200Q12 6 17 5"/><path d="M7 9.400Q12 9.200 17 8.200"/><path d="M7 12.600Q12 12.400 17 11.400"/><path d="M7 15.800Q12 15.600 17 14.600"/><path d="M7 19Q12 18.800 17 17.800"/>
</g>
<path d="M7 4 h10 v0.8 q-5 -1 -10 0z" fill="#777"/></svg>
<svg class="abs" style="left:770px;top:481px" width="24" height="24"><rect x="3" y="4" width="2" height="16" fill="#bcbcbc"/><rect x="17" y="4" width="2" height="16" fill="#bcbcbc"/>
<rect x="6" y="4" width="10" height="8" fill="#e4e6e8"/>
<g stroke="#777" stroke-width="1.8" fill="none">
<path d="M6 6.6 Q11 6.2 16 4.8"/><path d="M6 10.2 Q11 9.8 16 8.4"/>
</g>
<path d="M6 4 h10 v0.8 q-5 -1 -10 0z" fill="#888"/>
<path d="M6 11.2 q5 1.8 10 0 V20 H6z" fill="#808080"/></svg>
<div class="inp" style="left:967px;top:481px">5 mm</div>
<div class="inp" style="left:1051px;top:481px">2 mm</div>
<div class="td" style="left:25px;top:513px">M5x0.8</div>
<div class="td" style="left:137px;top:513px">Contour métrique ISO</div>
<div class="td" style="left:327px;top:513px">5.0 mm</div>
<div class="td" style="left:411px;top:513px">M5x0.8</div>
<div class="td" style="left:580px;top:513px">6H</div>
<svg class="abs" style="left:732px;top:507px" width="24" height="24"><rect x="0.5" y="0.5" width="23" height="23" rx="2" fill="#e6f2fa" stroke="#6cc0ea"/>
<rect x="4" y="4" width="2" height="16" fill="#b7b2b0"/><rect x="18" y="4" width="2" height="16" fill="#b7b2b0"/>
<rect x="7" y="4" width="10" height="16" fill="#dfe3e6"/>
<g stroke="url(#thg)" stroke-width="1.9" fill="none">
<path d="M7 6.200Q12 6 17 5"/><path d="M7 9.400Q12 9.200 17 8.200"/><path d="M7 12.600Q12 12.400 17 11.400"/><path d="M7 15.800Q12 15.600 17 14.600"/><path d="M7 19Q12 18.800 17 17.800"/>
</g>
<path d="M7 4 h10 v0.8 q-5 -1 -10 0z" fill="#777"/></svg>
<svg class="abs" style="left:770px;top:507px" width="24" height="24"><rect x="3" y="4" width="2" height="16" fill="#bcbcbc"/><rect x="17" y="4" width="2" height="16" fill="#bcbcbc"/>
<rect x="6" y="4" width="10" height="8" fill="#e4e6e8"/>
<g stroke="#777" stroke-width="1.8" fill="none">
<path d="M6 6.6 Q11 6.2 16 4.8"/><path d="M6 10.2 Q11 9.8 16 8.4"/>
</g>
<path d="M6 4 h10 v0.8 q-5 -1 -10 0z" fill="#888"/>
<path d="M6 11.2 q5 1.8 10 0 V20 H6z" fill="#808080"/></svg>
<div class="inp" style="left:967px;top:507px">6 mm</div>
<div class="inp" style="left:1051px;top:507px">3 mm</div>
<div class="td" style="left:25px;top:539px">M8x0.5</div>
<div class="td" style="left:137px;top:539px">Contour métrique ISO</div>
<div class="td" style="left:327px;top:539px">8.0 mm</div>
<div class="td" style="left:411px;top:539px">M8x0.5</div>
<div class="td" style="left:580px;top:539px">6H</div>
<svg class="abs" style="left:732px;top:533px" width="24" height="24"><rect x="0.5" y="0.5" width="23" height="23" rx="2" fill="#e6f2fa" stroke="#6cc0ea"/>
<rect x="4" y="4" width="2" height="16" fill="#b7b2b0"/><rect x="18" y="4" width="2" height="16" fill="#b7b2b0"/>
<rect x="7" y="4" width="10" height="16" fill="#dfe3e6"/>
<g stroke="url(#thg)" stroke-width="1.9" fill="none">
<path d="M7 6.200Q12 6 17 5"/><path d="M7 9.400Q12 9.200 17 8.200"/><path d="M7 12.600Q12 12.400 17 11.400"/><path d="M7 15.800Q12 15.600 17 14.600"/><path d="M7 19Q12 18.800 17 17.800"/>
</g>
<path d="M7 4 h10 v0.8 q-5 -1 -10 0z" fill="#777"/></svg>
<svg class="abs" style="left:770px;top:533px" width="24" height="24"><rect x="3" y="4" width="2" height="16" fill="#bcbcbc"/><rect x="17" y="4" width="2" height="16" fill="#bcbcbc"/>
<rect x="6" y="4" width="10" height="8" fill="#e4e6e8"/>
<g stroke="#777" stroke-width="1.8" fill="none">
<path d="M6 6.6 Q11 6.2 16 4.8"/><path d="M6 10.2 Q11 9.8 16 8.4"/>
</g>
<path d="M6 4 h10 v0.8 q-5 -1 -10 0z" fill="#888"/>
<path d="M6 11.2 q5 1.8 10 0 V20 H6z" fill="#808080"/></svg>
<div class="inp" style="left:967px;top:533px">10 mm</div>
<div class="inp" style="left:1051px;top:533px">4 mm</div>
<div class="td" style="left:25px;top:565px">M8x1.25</div>
<div class="td" style="left:137px;top:565px">Contour métrique ISO</div>
<div class="td" style="left:327px;top:565px">8.0 mm</div>
<div class="td" style="left:411px;top:565px">M8x1.25</div>
<div class="td" style="left:580px;top:565px">6H</div>
<svg class="abs" style="left:732px;top:559px" width="24" height="24"><rect x="0.5" y="0.5" width="23" height="23" rx="2" fill="#e6f2fa" stroke="#6cc0ea"/>
<rect x="4" y="4" width="2" height="16" fill="#b7b2b0"/><rect x="18" y="4" width="2" height="16" fill="#b7b2b0"/>
<rect x="7" y="4" width="10" height="16" fill="#dfe3e6"/>
<g stroke="url(#thg)" stroke-width="1.9" fill="none">
<path d="M7 6.200Q12 6 17 5"/><path d="M7 9.400Q12 9.200 17 8.200"/><path d="M7 12.600Q12 12.400 17 11.400"/><path d="M7 15.800Q12 15.600 17 14.600"/><path d="M7 19Q12 18.800 17 17.800"/>
</g>
<path d="M7 4 h10 v0.8 q-5 -1 -10 0z" fill="#777"/></svg>
<svg class="abs" style="left:770px;top:559px" width="24" height="24"><rect x="3" y="4" width="2" height="16" fill="#bcbcbc"/><rect x="17" y="4" width="2" height="16" fill="#bcbcbc"/>
<rect x="6" y="4" width="10" height="8" fill="#e4e6e8"/>
<g stroke="#777" stroke-width="1.8" fill="none">
<path d="M6 6.6 Q11 6.2 16 4.8"/><path d="M6 10.2 Q11 9.8 16 8.4"/>
</g>
<path d="M6 4 h10 v0.8 q-5 -1 -10 0z" fill="#888"/>
<path d="M6 11.2 q5 1.8 10 0 V20 H6z" fill="#808080"/></svg>
<div class="inp" style="left:967px;top:559px">10 mm</div>
<div class="inp" style="left:1051px;top:559px">4 mm</div>
<div class="abs" style="left:8px;top:531px;width:1147px;height:28px;border:2px solid #6ebfe8;border-radius:3px"></div>
<div class="inp" style="left:18px;top:590px;width:38px">1</div>
<svg class="abs" style="left:60px;top:590px" width="140" height="24" fill="none">
<path d="M8 12h10M13 7v10" stroke="#333" stroke-width="2"/>
<path d="M34.5 4v16" stroke="#c6ccd6" stroke-width="1"/>
<path d="M52 15.5l5-5.5l5 5.5" stroke="#c4c4c4" stroke-width="2"/>
<path d="M74 10l5 5.5l5-5.5" stroke="#c4c4c4" stroke-width="2"/>
<path d="M103.5 7l-5.5 5.5l5.5 5.5" stroke="#c4c4c4" stroke-width="2"/>
<path d="M120.5 7l5.5 5.5l-5.5 5.5" stroke="#c4c4c4" stroke-width="2"/>
</svg>
<div id="footline"></div>
<div id="fermer">Fermer</div>
<div class="sidebar" style="top:812px;border-top:none"></div><svg class="abs" style="left:222px;top:819px" width="11" height="11"><circle cx="5.5" cy="5.5" r="4.6" fill="#222"/><rect x="3" y="4.9" width="5" height="1.2" fill="#fff"/><rect x="4.9" y="3" width="1.2" height="5" fill="#fff"/></svg>
<div id="toolbar"><svg width="204" height="24" viewBox="463 812 204 24" fill="none">
<defs><linearGradient id="tbBlue" x1="0" y1="0" x2="0" y2="1"><stop offset="0" stop-color="#b9d0ee"/><stop offset="1" stop-color="#7fa6dc"/></linearGradient>
<radialGradient id="tbLens" cx="0.4" cy="0.35" r="0.7"><stop offset="0" stop-color="#fff"/><stop offset="1" stop-color="#bcd3e6"/></radialGradient></defs>
<!-- look at -->
<path d="M467 821.300L472.100 816.400L472.800 818.800L477.700 817L478.400 816.700V821.300z" fill="#c9cdd4" stroke="#3a3f4a" stroke-width=".9" stroke-linejoin="round"/>
<rect x="467" y="821.700" width="14.300" height="9.600" fill="#fdfdfd" stroke="#2f3440" stroke-width="1.150"/>
<rect x="469.800" y="824.900" width="8.600" height="3.600" fill="#a9aebd" stroke="#2f3440" stroke-width=".9"/>
<!-- hand -->
<path d="M492.300 823.800C492.600 822.700 493.600 822.600 494.300 823.400L496 825.400L495.600 818.600C495.600 817 497.600 817 497.700 818.500L497.900 822.400L499.200 822.300L499.200 817.300C499.300 815.700 502.100 815.700 502.200 817.300L502.300 822.300L502.600 817.600C502.700 816.200 504.900 816.300 504.900 817.800L505 823L505.800 820.400C506.200 818.900 508.200 819.200 508 820.700C507.800 823 506.900 826 505.800 828.200L504.300 831.600H498.400C497.300 830.400 495.600 828.400 494.500 826.800C493.600 825.700 492.700 824.800 492.300 823.800z" fill="#f1f4f7" stroke="#2b2b2b" stroke-width="1" stroke-linejoin="round"/>
<path d="M499.200 822.300v1.800M502.300 822.300v1.800M505 823v1.500" stroke="#2b2b2b" stroke-width=".8"/>
<!-- zoom +- -->
<circle cx="522.700" cy="823.100" r="4.600" fill="url(#tbLens)" stroke="#3a3a3a" stroke-width="1.200"/>
<path d="M526.300 826.800l3.700 3.500" stroke="#2d3540" stroke-width="2.400" stroke-linecap="round"/>
<path d="M529.200 817.800h4.600M531.500 815.500v4.600M529.200 822.500h4.600" stroke="#2a2a2a" stroke-width="1.200"/>
<!-- zoom window -->
<circle cx="550.300" cy="822.300" r="5.800" fill="#f4f7fa" stroke="#2e2e2e" stroke-width="1.300"/>
<rect x="547.600" y="819.700" width="5.300" height="5" fill="#dfe5ee" stroke="#444" stroke-width="1"/>
<path d="M554.700 826.700l4.600 4.400" stroke="#2a2a2a" stroke-width="2.400" stroke-linecap="round"/>
<path d="M565 822.200h6l-3 3.500z" fill="#222"/>
<!-- monitor -->
<rect x="577.600" y="816.400" width="15" height="11.800" rx="1.300" fill="#f2f2f2" stroke="#333" stroke-width="1.100"/>
<rect x="579.700" y="818.500" width="10.800" height="7.600" rx=".8" fill="url(#tbBlue)" stroke="#2b4a86" stroke-width="1"/>
<path d="M582.500 828.500h5l.8 2.300h-6.600z" fill="#e5e5e5" stroke="#333" stroke-width=".9"/>
<path d="M595.300 822.200h6l-3 3.500z" fill="#222"/>
<!-- grid -->
<rect x="608.600" y="816.400" width="15" height="15" rx="1" fill="#fff" stroke="#444" stroke-width="1.100"/>
<path d="M611.700 816.500v15M614.600 816.500v15M617.500 816.500v15M620.400 816.500v15M608.700 819.400h15M608.700 822.300h15M608.700 825.200h15M608.700 828.100h15" stroke="#7c7c7c" stroke-width="1.300"/>
<rect x="608.600" y="826" width="15" height="5.400" fill="#555" opacity=".35"/>
<path d="M626.300 822.200h6l-3 3.500z" fill="#222"/>
<!-- 4 views -->
<g fill="#a9c3e8" stroke="#1f3c7a" stroke-width="1.200"><rect x="639.500" y="817.400" width="6.600" height="5.600" rx=".8"/><rect x="647.100" y="817.400" width="6.600" height="5.600" rx=".8"/><rect x="639.500" y="824" width="6.600" height="5.600" rx=".8"/><rect x="647.100" y="824" width="6.600" height="5.600" rx=".8"/></g>
<g fill="#8fb0df"><rect x="641.300" y="819.200" width="3" height="2"/><rect x="648.900" y="819.200" width="3" height="2"/><rect x="641.300" y="825.800" width="3" height="2"/><rect x="648.900" y="825.800" width="3" height="2"/></g>
<path d="M657.200 822.200h6l-3 3.500z" fill="#222"/>
</svg></div>
</body>
</html>
